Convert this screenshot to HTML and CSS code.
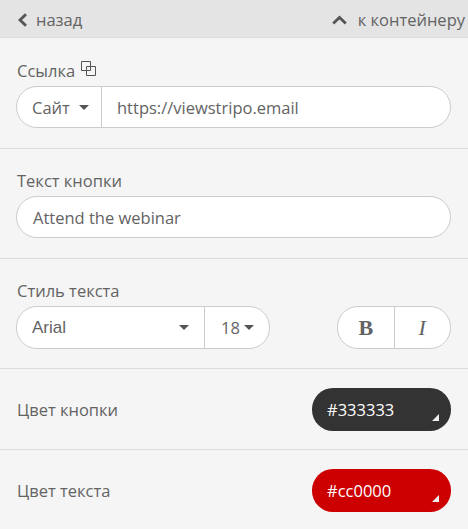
FILE: index.html
```html
<!DOCTYPE html>
<html lang="ru">
<head>
    <meta charset="UTF-8">
    <meta name="viewport" content="width=device-width, initial-scale=1.0">
    <title>Кнопка</title>
    <link rel="stylesheet" href="styles.css">
</head>
<body>
    <div class="topbar">
        <a class="nav-link">
            <svg class="nav-icon" width="11" height="14" viewBox="0 0 11 14"><path d="M9 1.200 3 7l6 5.800" fill="none" stroke="#555" stroke-width="2.800"/></svg>
            назад
        </a>
        <a class="nav-link">
            <svg class="nav-icon up" width="15" height="10" viewBox="0 0 15 10"><path d="M1.200 8.500 7.500 2.500l6.300 6" fill="none" stroke="#555" stroke-width="2.800"/></svg>
            к контейнеру
        </a>
    </div>

    <div class="section first">
        <div class="label">Ссылка
            <svg class="copy-icon" width="17" height="17" viewBox="0 0 17 17"><path d="M1.500 1.500h9v9h-9zM6.500 6.500h9v9h-9z" fill="none" stroke="#555" stroke-width="1"/></svg>
        </div>
        <div class="pill-group">
            <div class="cell site-select">Сайт <span class="caret"></span></div>
            <div class="cell url">https://viewstripo.email</div>
        </div>
    </div>

    <div class="section">
        <div class="label">Текст кнопки</div>
        <div class="pill-group">
            <div class="cell url">Attend the webinar</div>
        </div>
    </div>

    <div class="section">
        <div class="label">Стиль текста</div>
        <div class="style-row">
            <div class="pill-group font-group">
                <div class="cell font-name">Arial <span class="caret"></span></div>
                <div class="cell font-size">18<span class="caret"></span></div>
            </div>
            <div class="pill-group bi-group">
                <div class="cell bi bold">B</div>
                <div class="cell bi italic">I</div>
            </div>
        </div>
    </div>

    <div class="color-row">
        <div class="color-label">Цвет кнопки</div>
        <div class="swatch dark">#333333<span class="corner"></span></div>
    </div>

    <div class="color-row last">
        <div class="color-label">Цвет текста</div>
        <div class="swatch red">#cc0000<span class="corner"></span></div>
    </div>
</body>
</html>
```

FILE: styles.css
```css
body {
    margin: 0;
    background-color: #f5f5f5;
    font-family: "Open Sans", Arial, sans-serif;
    font-size: 16.5px;
    color: #636363;
}

.topbar {
    display: flex;
    justify-content: space-between;
    align-items: center;
    padding: 2px 3px 0 17px;
    box-sizing: border-box;
    background-color: #e4e4e4;
    border-bottom: 1px solid #dcdcdc;
    height: 38px;
}

.nav-link {
    display: flex;
    align-items: center;
    gap: 8px;
}

.nav-icon.up {
    margin-right: 3px;
}

.section {
    box-sizing: border-box;
    height: 110px;
    padding: 22px 17px 0 16px;
    border-bottom: 1px solid #dcdcdc;
}

.section.first {
    height: 111px;
    padding-top: 23px;
}

.label {
    display: flex;
    align-items: center;
    gap: 5px;
    height: 20px;
    margin-bottom: 5px;
    padding-left: 1px;
    line-height: 20px;
}

.copy-icon {
    margin-top: -6px;
}

.pill-group {
    display: flex;
    height: 40px;
    background-color: #fff;
    border: 1px solid #ccc;
    border-radius: 21px;
    overflow: hidden;
}

.cell {
    display: flex;
    align-items: center;
    box-sizing: border-box;
}

.site-select {
    width: 85px;
    padding-left: 15px;
    border-right: 1px solid #ccc;
}

.url {
    flex: 1;
    padding-left: 16px;
}

.site-select + .url {
    padding-left: 15px;
}

.caret {
    display: inline-block;
    width: 0;
    height: 0;
    margin-left: 9px;
    border-left: 5px solid transparent;
    border-right: 5px solid transparent;
    border-top: 5px solid #555;
}

.style-row {
    display: flex;
    justify-content: space-between;
}

.style-row .pill-group {
    height: 41px;
}

.font-group {
    width: 252px;
}

.font-name {
    width: 188px;
    padding: 0 15px;
    justify-content: space-between;
    border-right: 1px solid #ccc;
    font-family: "Liberation Sans", Arial, sans-serif;
    font-size: 17px;
}

.font-size {
    flex: 1;
    padding-left: 16px;
}

.font-size .caret {
    margin-left: 4px;
}

.bi-group {
    width: 112px;
}

.bi {
    flex: 1;
    justify-content: center;
    font-family: "Liberation Serif", "Times New Roman", serif;
    font-size: 22px;
}

.bold {
    font-weight: bold;
    border-right: 1px solid #ccc;
}

.italic {
    font-style: italic;
}

.color-row {
    display: flex;
    justify-content: space-between;
    align-items: flex-start;
    box-sizing: border-box;
    height: 81px;
    padding: 19px 17px 0 17px;
    border-bottom: 1px solid #dcdcdc;
}

.color-row.last {
    border-bottom: none;
}

.color-label {
    line-height: 43px;
}

.swatch {
    position: relative;
    display: flex;
    align-items: center;
    box-sizing: border-box;
    width: 139px;
    height: 43px;
    padding-left: 15px;
    border-radius: 21px;
    color: #fff;
}

.dark {
    background-color: #333;
}

.red {
    background-color: #c00;
}

.corner {
    position: absolute;
    right: 12px;
    bottom: 10px;
    width: 0;
    height: 0;
    border-left: 7px solid transparent;
    border-bottom: 7px solid #eee;
}
```
